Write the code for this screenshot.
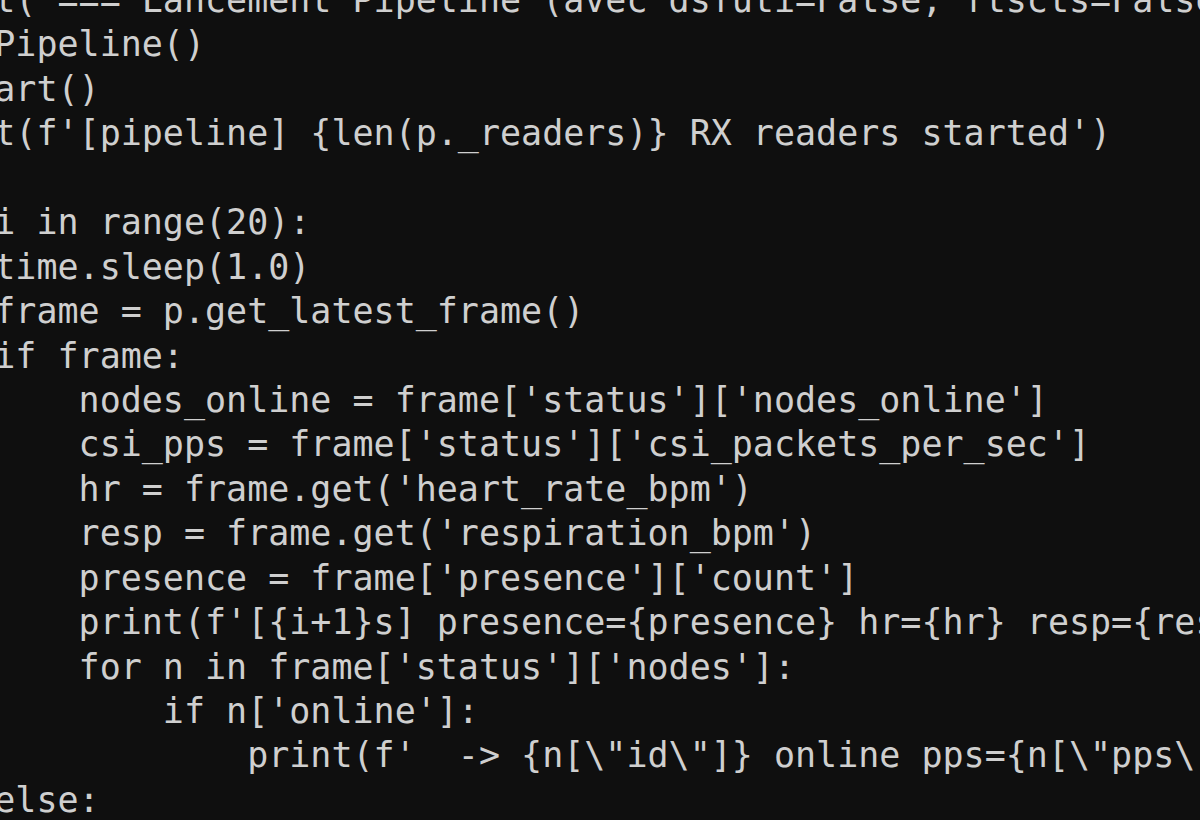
const lines = [
  "print('=== Lancement Pipeline (avec dsfuti=False, ftscts=False) ===')",
  "p = Pipeline()",
  "p.start()",
  "print(f'[pipeline] {len(p._readers)} RX readers started')",
  "",
  "for i in range(20):",
  "    time.sleep(1.0)",
  "    frame = p.get_latest_frame()",
  "    if frame:",
  "        nodes_online = frame['status']['nodes_online']",
  "        csi_pps = frame['status']['csi_packets_per_sec']",
  "        hr = frame.get('heart_rate_bpm')",
  "        resp = frame.get('respiration_bpm')",
  "        presence = frame['presence']['count']",
  "        print(f'[{i+1}s] presence={presence} hr={hr} resp={resp} nodes={nodes_online}')",
  "        for n in frame['status']['nodes']:",
  "            if n['online']:",
  "                print(f'  -> {n[\\\"id\\\"]} online pps={n[\\\"pps\\\"]}')",
  "    else:",
];

export default function App() {
  return (
    <div className="h-[820px] w-[1200px] overflow-hidden bg-[#0f0f0f]">
      <div className="-ml-[90px] -mt-[22px] font-['DejaVu_Sans_Mono',monospace] text-[35px] leading-[44.44px] text-[#cfcfcf]">
        {lines.map((line, i) => (
          <div key={i} className="h-[44.44px] whitespace-pre">
            {line}
          </div>
        ))}
      </div>
    </div>
  );
}
